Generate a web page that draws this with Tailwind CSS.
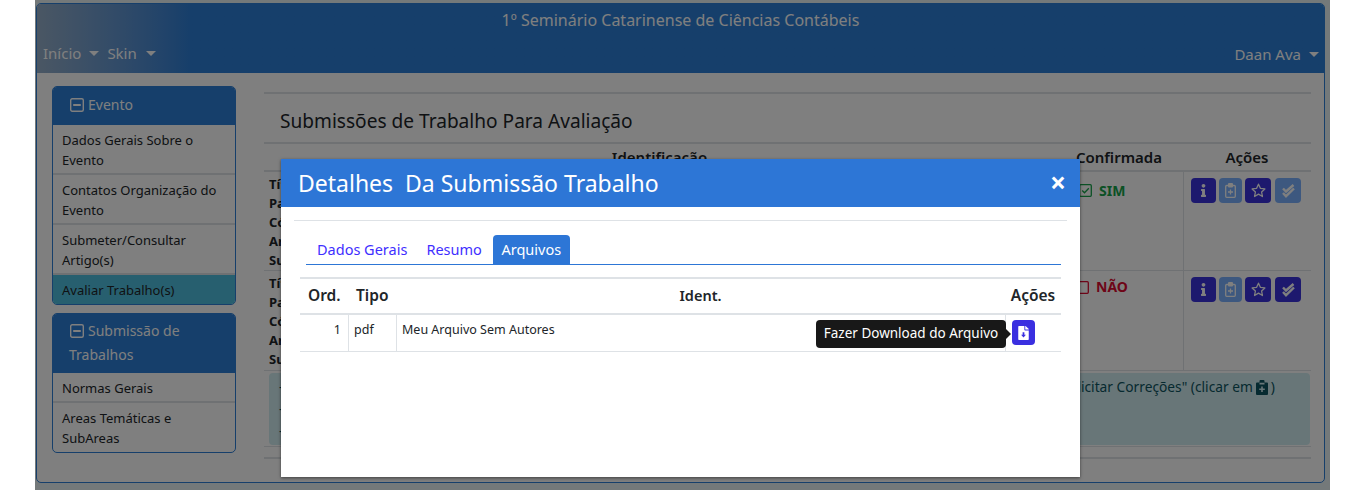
<!DOCTYPE html>
<html lang="pt">
<head>
<meta charset="utf-8">
<script src="https://cdn.jsdelivr.net/npm/@tailwindcss/browser@4"></script>
</head>
<body class="bg-white font-['Noto_Sans',sans-serif] text-[#212529] overflow-hidden">
<div class="relative ml-[35px] w-[1295px] h-[490px] bg-[#e9f2f4] pt-[3px] pl-[1px] overflow-hidden">
  <!-- page card -->
  <div class="w-[1289px] h-[480px] bg-white border border-[#2c7ed6] rounded-[5px] flex flex-col">
    <header class="h-[69px] shrink-0 rounded-t-[4px] bg-gradient-to-r from-[#95aec8] via-[#2c7ed6] via-[12%] to-[#2c7ed6] text-white relative">
      <div class="pt-[4px] text-center text-[16px] leading-[24px]">1º Seminário Catarinense de Ciências Contábeis</div>
      <nav class="mt-[8px] px-[6px] flex items-center text-[15px] leading-[24px]">
        <span class="flex items-center">Início<i class="ml-[8px] border-x-[5px] border-x-transparent border-t-[5px] border-t-white"></i></span>
        <span class="ml-[8px] flex items-center">Skin<i class="ml-[9px] border-x-[5px] border-x-transparent border-t-[5px] border-t-white"></i></span>
        <span class="ml-auto flex items-center pt-[2px] -mr-[1px]">Daan Ava<i class="ml-[8px] border-x-[5px] border-x-transparent border-t-[5px] border-t-white"></i></span>
      </nav>
    </header>
    <div class="flex flex-1">
      <!-- sidebar -->
      <aside class="ml-[15px] mt-[13px] w-[184px] shrink-0 flex flex-col gap-[8px] text-[13px] leading-[20px]">
        <section class="border border-[#2c7ed6] rounded-[5px] overflow-hidden">
          <div class="h-[38px] pb-[2px] bg-[#2c7ed6] text-white text-[14px] flex items-center pl-[17px] gap-[4px]">
            <svg class="w-[14px] h-[14px]" viewBox="0 0 14 14" fill="none" stroke="currentColor" stroke-width="1.4"><rect x=".7" y=".7" width="12.6" height="12.6" rx="1.5"/><path d="M3.2 7h7.600" stroke-width="1.8"/></svg>
            Evento
          </div>
          <a class="block px-[9px] pt-[5px] pb-[3px] border-b-2 border-[#dee2e6]">Dados Gerais Sobre o Evento</a>
          <a class="block px-[9px] pt-[5px] pb-[3px] border-b-2 border-[#dee2e6]">Contatos Organização do Evento</a>
          <a class="block px-[9px] pt-[5px] pb-[3px] border-b-2 border-[#dee2e6]">Submeter/Consultar Artigo(s)</a>
          <a class="block px-[9px] pt-[5px] pb-[4px] bg-[#4fbfdf]">Avaliar Trabalho(s)</a>
        </section>
        <section class="border border-[#2c7ed6] rounded-[5px] overflow-hidden">
          <div class="bg-[#2c7ed6] text-white text-[14px] leading-[24px] pt-[5px] pb-[6px] pl-[16px]">
            <svg class="inline-block align-[-2px] ml-[1px] mr-[4px] w-[14px] h-[14px]" viewBox="0 0 14 14" fill="none" stroke="currentColor" stroke-width="1.4"><rect x=".7" y=".7" width="12.6" height="12.6" rx="1.5"/><path d="M3.2 7h7.600" stroke-width="1.8"/></svg>Submissão de Trabalhos
          </div>
          <a class="block px-[9px] pt-[5px] pb-[3px] border-b-2 border-[#dee2e6]">Normas Gerais</a>
          <a class="block px-[9px] pt-[5px] pb-[4px]">Areas Temáticas e SubAreas</a>
        </section>
      </aside>
      <!-- main -->
      <main class="ml-[28px] w-[1047px] mt-[19px]">
        <div class="border-t-2 border-[#dee2e6] h-[50px] pl-[16px] pt-[7px] flex items-center text-[19.1px]">Submissões de Trabalho Para Avaliação</div>
        <div class="border-y-2 border-[#dee2e6] flex h-[30px] items-center text-[15px] font-semibold leading-[26px]">
          <div class="w-[791px] text-center">Identificação</div>
          <div class="w-[128px] text-center">Confirmada</div>
          <div class="w-[128px] text-center">Ações</div>
        </div>
        <!-- rows -->
        <div class="flex h-[99px] border-b border-[#dee2e6]">
          <div class="w-[791px] pl-[5px] pt-[3px] text-[13px] leading-[19px] font-bold">Título:<br>Palavras-chave:<br>Código:<br>Area:<br>Subárea:</div>
          <div class="w-[128px] pl-[24px] pt-[9px] flex items-start gap-[7px] text-[#16a34a] text-[14px] leading-[20px] font-bold">
            <svg class="w-[13px] h-[13px] mt-[3px]" viewBox="0 0 13 13" fill="none" stroke="currentColor" stroke-width="1.3"><rect x=".7" y=".7" width="11.600" height="11.600" rx="1"/><path d="M3.200 6.500l2.300 2.300 4.300-4.600"/></svg>SIM
          </div>
          <div class="w-[128px] border-l border-[#dee2e6] pl-[7px] pt-[6px] flex items-start gap-[3px]">
            <button class="w-[25px] h-[25px] rounded-[4px] bg-[#3a32dc] flex items-center justify-center"><svg class="h-[13px] w-[5px]" viewBox="0 0 192 512" preserveAspectRatio="none" fill="#fff"><path d="M20 424.229h20V279.771H20c-11.046 0-20-8.954-20-20V212c0-11.046 8.954-20 20-20h112c11.046 0 20 8.954 20 20v212.229h20c11.046 0 20 8.954 20 20V492c0 11.046-8.954 20-20 20H20c-11.046 0-20-8.954-20-20v-47.771c0-11.046 8.954-20 20-20zM96 0C56.235 0 24 32.235 24 72s32.235 72 72 72 72-32.235 72-72S135.764 0 96 0z"/></svg></button>
            <button class="w-[23px] h-[25px] rounded-[4px] bg-[#7ab0ff] flex items-center justify-center"><svg class="w-[11px] h-[15px]" viewBox="0 0 11 15" fill="none" stroke="#fff" stroke-width="1.300"><rect x=".7" y="2.500" width="9.600" height="11.800" rx="1"/><rect x="3" y="0" width="5" height="4.500" rx="1" fill="#fff" stroke="none"/><path d="M5.500 6.500v5M3 9h5"/></svg></button>
            <button class="w-[26px] h-[25px] rounded-[4px] bg-[#3a32dc] flex items-center justify-center"><svg class="w-[15px] h-[15px]" viewBox="0 0 16 16" fill="none" stroke="#fff" stroke-width="1.4" stroke-linejoin="round"><path d="M8 1.300l2 4.400 4.800.6-3.500 3.300.9 4.800L8 11.900l-4.200 2.500.9-4.800L1.200 6.300 6 5.700z"/></svg></button>
            <button class="ml-[1px] w-[26px] h-[25px] rounded-[4px] bg-[#7ab0ff] flex items-center justify-center"><svg class="w-[15px] h-[14px]" viewBox="0 0 15 14" fill="none" stroke="#fff" stroke-width="2.400"><path d="M2 4.500l3 3L12.500 1M2 9l3 3.200L13 4.500"/></svg></button>
          </div>
        </div>
        <div class="flex h-[100px] border-b border-[#dee2e6]">
          <div class="w-[791px] pl-[5px] pt-[3px] text-[13px] leading-[19px] font-bold">Título:<br>Palavras-chave:<br>Código:<br>Area:<br>Subárea:</div>
          <div class="w-[128px] pl-[21px] pt-[6px] flex items-start gap-[7px] text-[#dc0a30] text-[14px] leading-[20px] font-bold">
            <svg class="w-[13px] h-[13px] mt-[4px]" viewBox="0 0 13 13" fill="none" stroke="currentColor" stroke-width="1.3"><rect x=".7" y=".7" width="11.600" height="11.600" rx="1"/></svg>NÃO
          </div>
          <div class="w-[128px] border-l border-[#dee2e6] pl-[7px] pt-[6px] flex items-start gap-[3px]">
            <button class="w-[25px] h-[25px] rounded-[4px] bg-[#3a32dc] flex items-center justify-center"><svg class="h-[13px] w-[5px]" viewBox="0 0 192 512" preserveAspectRatio="none" fill="#fff"><path d="M20 424.229h20V279.771H20c-11.046 0-20-8.954-20-20V212c0-11.046 8.954-20 20-20h112c11.046 0 20 8.954 20 20v212.229h20c11.046 0 20 8.954 20 20V492c0 11.046-8.954 20-20 20H20c-11.046 0-20-8.954-20-20v-47.771c0-11.046 8.954-20 20-20zM96 0C56.235 0 24 32.235 24 72s32.235 72 72 72 72-32.235 72-72S135.764 0 96 0z"/></svg></button>
            <button class="w-[23px] h-[25px] rounded-[4px] bg-[#7ab0ff] flex items-center justify-center"><svg class="w-[11px] h-[15px]" viewBox="0 0 11 15" fill="none" stroke="#fff" stroke-width="1.300"><rect x=".7" y="2.500" width="9.600" height="11.800" rx="1"/><rect x="3" y="0" width="5" height="4.500" rx="1" fill="#fff" stroke="none"/><path d="M5.500 6.500v5M3 9h5"/></svg></button>
            <button class="w-[26px] h-[25px] rounded-[4px] bg-[#3a32dc] flex items-center justify-center"><svg class="w-[15px] h-[15px]" viewBox="0 0 16 16" fill="none" stroke="#fff" stroke-width="1.4" stroke-linejoin="round"><path d="M8 1.300l2 4.400 4.800.6-3.500 3.300.9 4.800L8 11.900l-4.200 2.500.9-4.800L1.200 6.300 6 5.700z"/></svg></button>
            <button class="ml-[1px] w-[26px] h-[25px] rounded-[4px] bg-[#3a32dc] flex items-center justify-center"><svg class="w-[15px] h-[14px]" viewBox="0 0 15 14" fill="none" stroke="#fff" stroke-width="2.400"><path d="M2 4.500l3 3L12.500 1M2 9l3 3.200L13 4.500"/></svg></button>
          </div>
        </div>
        <!-- alert -->
        <div class="mt-[2px] ml-[5px] mr-[1px] h-[72px] rounded-[4px] bg-[#d1ecf1] text-[#0c5460] text-[13.75px] leading-[22px] pl-[10px] pr-[35px] pt-[3px]">
          <div class="flex justify-between"><span>-</span><span class="flex items-center gap-[3px]">"Solicitar Correções" (clicar em <svg class="w-[12px] h-[15px] shrink-0" viewBox="0 0 12 15" fill="currentColor"><path d="M1 2.500h2.500V1a1 1 0 0 1 1-1h3a1 1 0 0 1 1 1v1.500H11a1 1 0 0 1 1 1V14a1 1 0 0 1-1 1H1a1 1 0 0 1-1-1V3.500a1 1 0 0 1 1-1z"/><path d="M3.500 3.600h5M6 6.500v5.500M3.200 9.200h5.600" stroke="#d1ecf1" stroke-width="1.600"/></svg>)</span></div>
          <div>-</div>
          <div>-</div>
        </div>
        <div class="mt-[1px] border-t border-[#dee2e6]"></div>
        <div class="mt-[10px] border-t-2 border-[#dee2e6]"></div>
      </main>
    </div>
  </div>

  <!-- backdrop -->
  <div class="absolute inset-0 bg-black/50"></div>

  <!-- modal -->
  <div class="absolute left-[246px] top-[159px] w-[799px] h-[318px] bg-white shadow-[0_1px_3px_rgba(0,0,0,.5)] overflow-hidden">
    <div class="h-[48px] bg-[#2d76d6] text-white flex items-center pl-[17px] pr-[14px]">
      <h2 class="text-[23px] whitespace-pre">Detalhes  Da Submissão Trabalho</h2>
      <span class="ml-auto text-[28px] font-bold leading-none -mt-[2px]">×</span>
    </div>
    <div class="mx-[13px] mt-[13px] border-t border-[#dee2e6]"></div>
    <div class="ml-[25px] mr-[19px] mt-[14px] flex h-[30px] border-b border-[#2d76d6] text-[14.5px] leading-[29px] text-[#3f2fff]">
      <a class="pl-[11px] pr-[10px]">Dados Gerais</a>
      <a class="px-[9px]">Resumo</a>
      <a class="ml-[2px] w-[77px] text-center text-white bg-[#2d76d6] rounded-t-[4px]">Arquivos</a>
    </div>
    <div class="mx-[19px] mt-[12px] text-[12.5px]">
      <div class="flex h-[38px] border-y-2 border-[#dee2e6] items-center text-[15.5px] font-semibold text-[#212529]">
        <div class="w-[48px] pl-[8px]">Ord.</div>
        <div class="w-[48px] pl-[8px]">Tipo</div>
        <div class="w-[609px] text-center text-[14.5px]">Ident.</div>
        <div class="flex-1 text-center">Ações</div>
      </div>
      <div class="flex h-[37px] border-b border-[#dee2e6] leading-[30px]">
        <div class="w-[49px] pr-[7px] text-right border-r border-[#dee2e6]">1</div>
        <div class="w-[48px] pl-[5px] border-r border-[#dee2e6]">pdf</div>
        <div class="w-[609px] pl-[5px] border-r border-[#dee2e6]">Meu Arquivo Sem Autores</div>
        <div class="pl-[6px] pt-[5px]">
          <button class="w-[23px] h-[25px] rounded-[4px] bg-[#3a2fe0] flex items-center justify-center">
            <svg class="w-[11px] h-[14px]" viewBox="0 0 384 512"><path fill="#fff" d="M224 136V0H24C10.700 0 0 10.700 0 24v464c0 13.300 10.700 24 24 24h336c13.300 0 24-10.700 24-24V160H248c-13.200 0-24-10.800-24-24zM384 121.900V128H256V0h6.100c6.400 0 12.500 2.500 17 7l97.900 98c4.500 4.500 7 10.600 7 16.900z"/><path fill="#3a2fe0" d="M160 232h64v88h56L192 416l-88-96h56z"/></svg>
          </button>
        </div>
      </div>
    </div>
    <!-- tooltip -->
    <div class="absolute left-[535px] top-[161px] w-[190px] h-[28px] pb-[2px] rounded-[4px] bg-[#181818] text-white text-[13.5px] flex items-center justify-center">Fazer Download do Arquivo<i class="absolute -right-[5px] top-[9px] border-y-[5px] border-y-transparent border-l-[5px] border-l-[#181818]"></i></div>
  </div>
</div>
</body>
</html>
